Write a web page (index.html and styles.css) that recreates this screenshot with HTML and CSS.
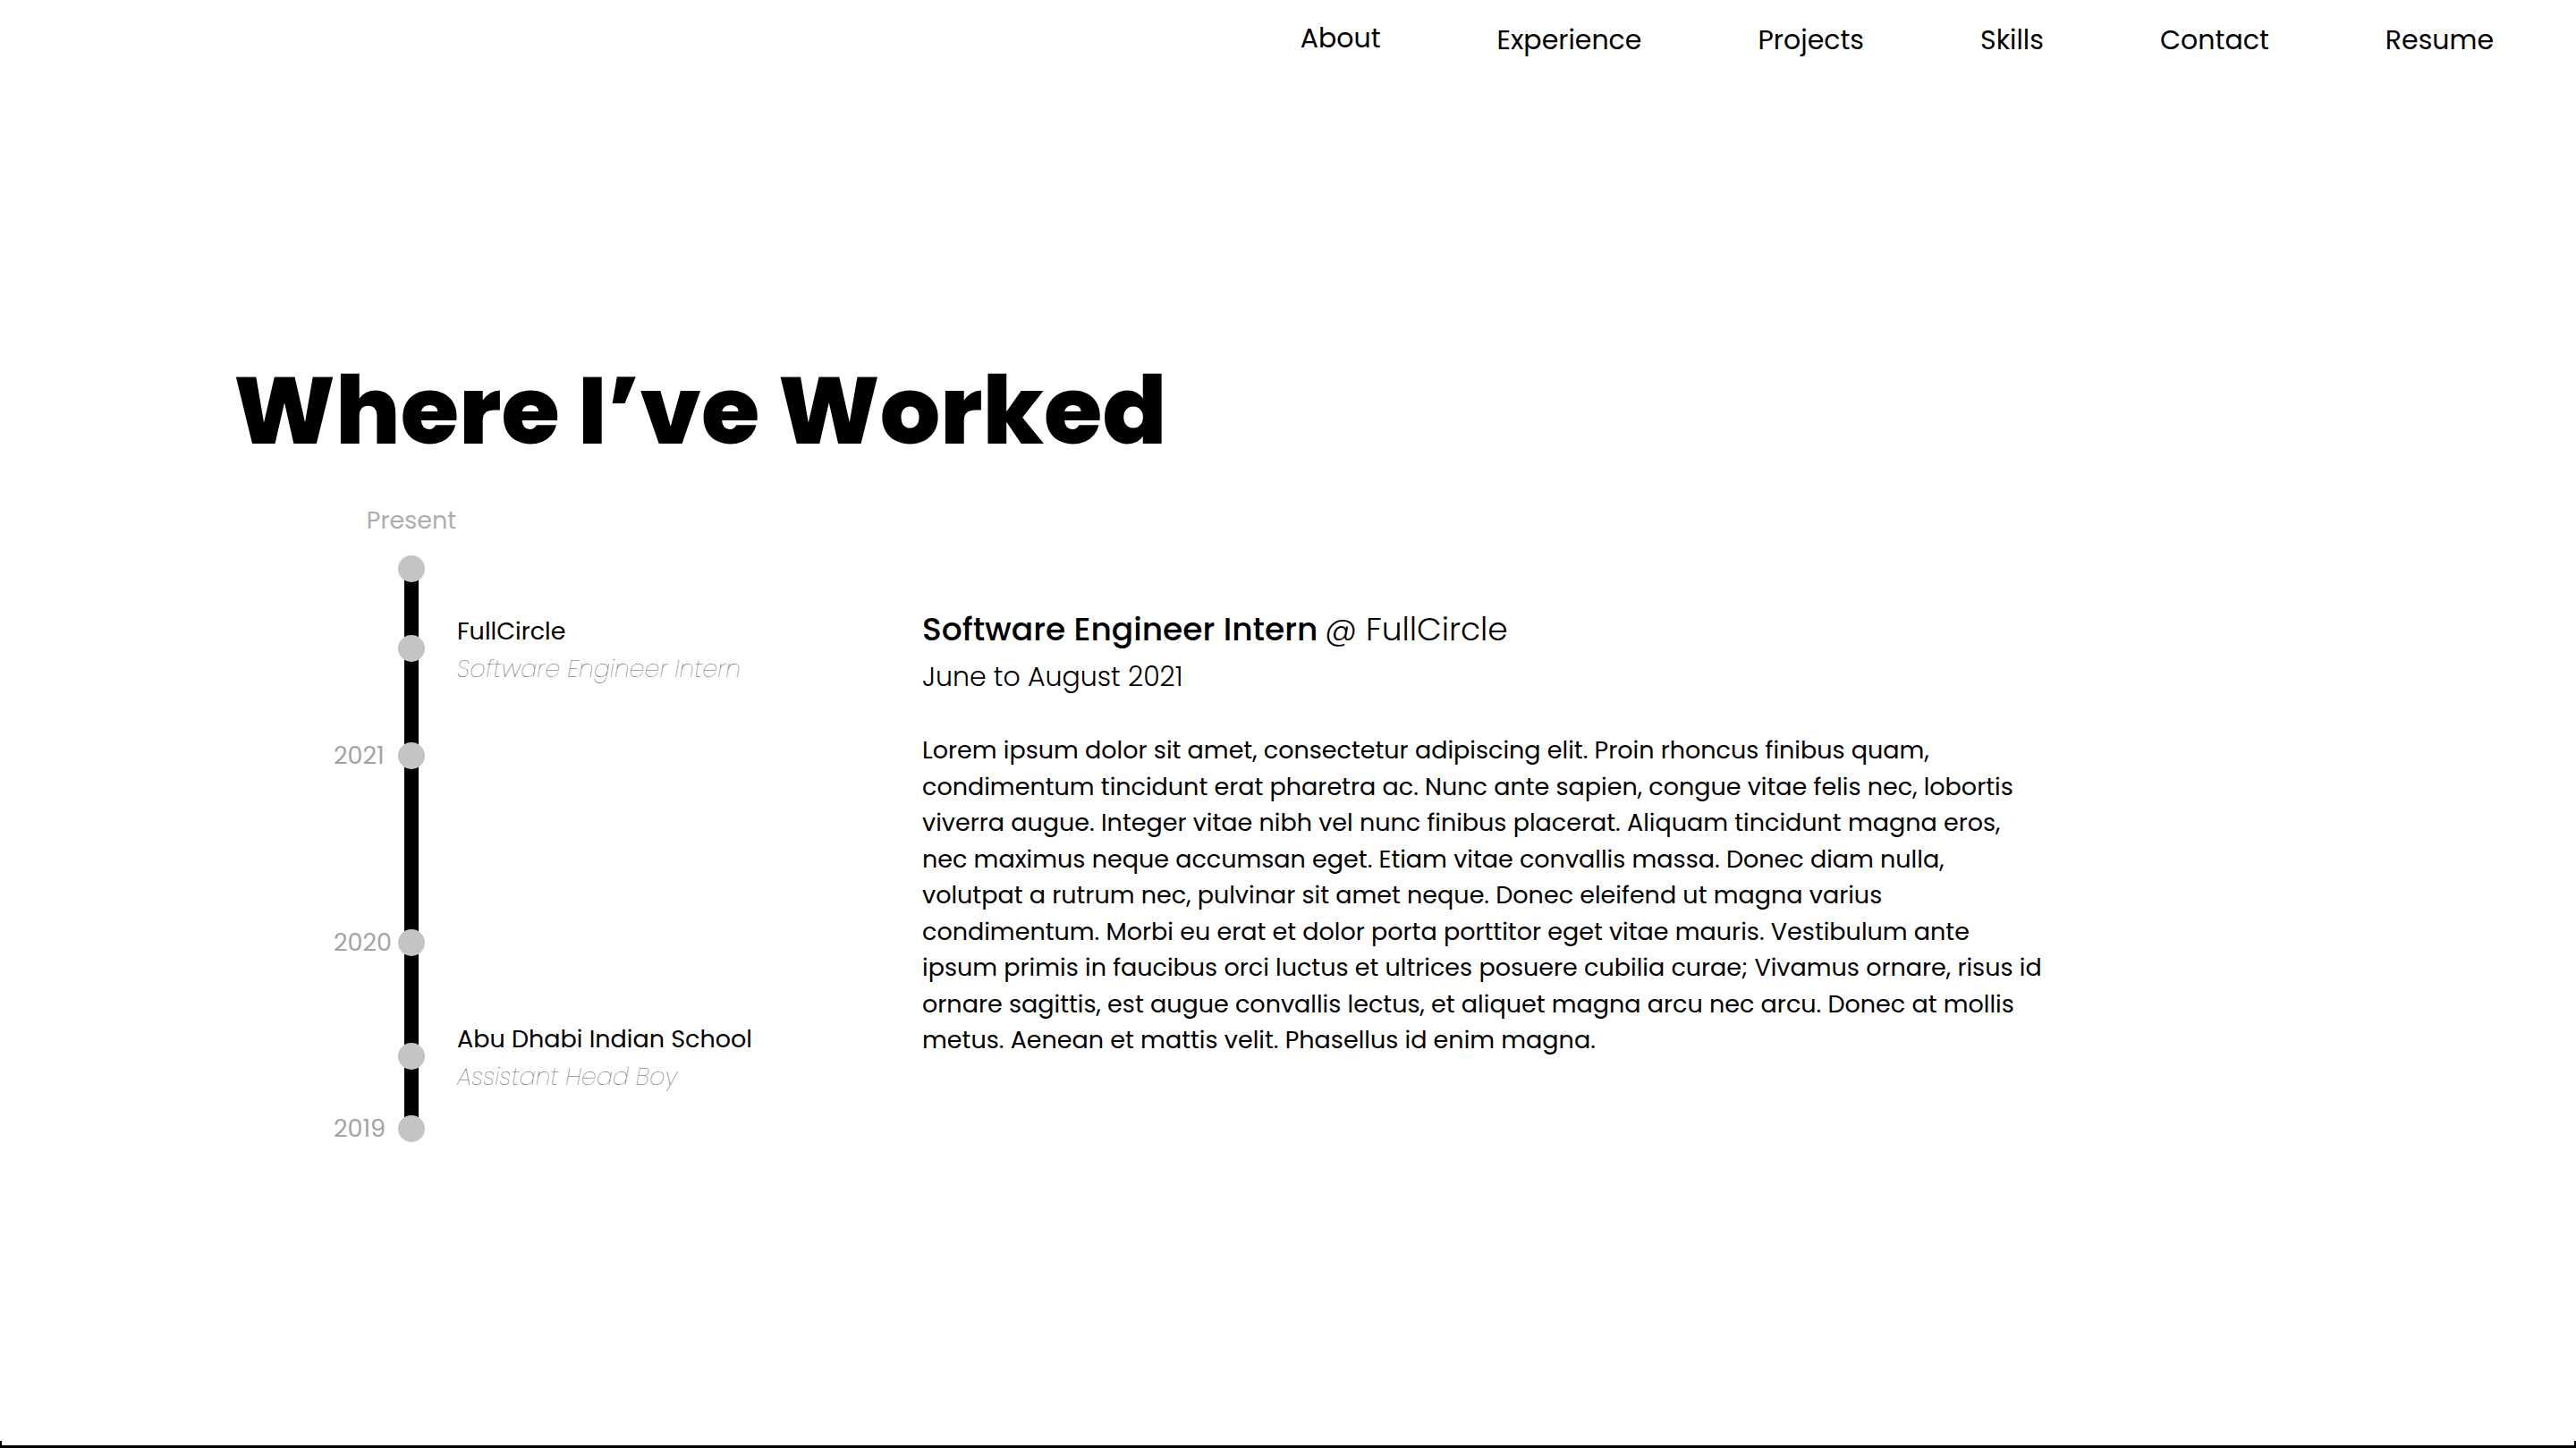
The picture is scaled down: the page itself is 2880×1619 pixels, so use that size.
FILE: index.html
```html
<!DOCTYPE html>
<html lang="en">
<head>
<meta charset="utf-8">
<title>Where I've Worked</title>
<link rel="stylesheet" href="styles.css">
</head>
<body>
<div class="page">
  <nav class="nav">
    <a class="nav-link nav-link--active" href="#about">About</a>
    <a class="nav-link" href="#experience">Experience</a>
    <a class="nav-link" href="#projects">Projects</a>
    <a class="nav-link" href="#skills">Skills</a>
    <a class="nav-link" href="#contact">Contact</a>
    <a class="nav-link" href="#resume">Resume</a>
  </nav>

  <section class="experience" id="experience">
    <h1 class="heading">Where I’ve Worked</h1>
    <div class="content">
      <div class="timeline">
        <div class="tl-present">Present</div>
        <div class="tl-row"><span class="tl-year"></span><span class="tl-dot"></span></div>
        <div class="tl-seg seg-1"></div>
        <div class="tl-row">
          <span class="tl-year"></span><span class="tl-dot"></span>
          <div class="tl-item">
            <div class="tl-co">FullCircle</div>
            <div class="tl-role">Software Engineer Intern</div>
          </div>
        </div>
        <div class="tl-seg seg-2"></div>
        <div class="tl-row"><span class="tl-year">2021</span><span class="tl-dot"></span></div>
        <div class="tl-seg seg-3"></div>
        <div class="tl-row"><span class="tl-year">2020</span><span class="tl-dot"></span></div>
        <div class="tl-seg seg-4"></div>
        <div class="tl-row">
          <span class="tl-year"></span><span class="tl-dot"></span>
          <div class="tl-item">
            <div class="tl-co">Abu Dhabi Indian School</div>
            <div class="tl-role">Assistant Head Boy</div>
          </div>
        </div>
        <div class="tl-seg seg-5"></div>
        <div class="tl-row"><span class="tl-year">2019</span><span class="tl-dot"></span></div>
      </div>

      <article class="job">
        <h2 class="job-title"><span class="job-role">Software Engineer Intern</span> <span class="job-at">@ FullCircle</span></h2>
        <div class="job-date">June to August 2021</div>
        <p class="job-desc">Lorem ipsum dolor sit amet, consectetur adipiscing elit. Proin rhoncus finibus quam,<br>
condimentum tincidunt erat pharetra ac. Nunc ante sapien, congue vitae felis nec, lobortis<br>
viverra augue. Integer vitae nibh vel nunc finibus placerat. Aliquam tincidunt magna eros,<br>
nec maximus neque accumsan eget. Etiam vitae convallis massa. Donec diam nulla,<br>
volutpat a rutrum nec, pulvinar sit amet neque. Donec eleifend ut magna varius<br>
condimentum. Morbi eu erat et dolor porta porttitor eget vitae mauris. Vestibulum ante<br>
ipsum primis in faucibus orci luctus et ultrices posuere cubilia curae; Vivamus ornare, risus id<br>
ornare sagittis, est augue convallis lectus, et aliquet magna arcu nec arcu. Donec at mollis<br>
metus. Aenean et mattis velit. Phasellus id enim magna.</p>
      </article>
    </div>
  </section>

  <div class="frame-edge"></div>
</div>
</body>
</html>
```

FILE: styles.css
```css
* { box-sizing: border-box; }

html, body {
  margin: 0;
  padding: 0;
  background: #ffffff;
  color: #000000;
  font-family: "Poppins", "Inter", "Noto Sans", sans-serif;
}

.page {
  height: 100vh;
  display: flex;
  flex-direction: column;
  overflow: hidden;
}

/* ---------- nav ---------- */
.nav {
  height: 88px;
  flex: none;
  display: flex;
  justify-content: flex-end;
  align-items: center;
  gap: 130px;
  padding-right: 92px;
}

.nav-link {
  font-size: 30px;
  font-weight: 400;
  color: #000;
  text-decoration: none;
  line-height: 40px;
  margin-top: 2px;
}

.nav-link--active {
  transform: translateY(-2px);
}

/* ---------- section ---------- */
.experience {
  padding-left: 261px;
}

.heading {
  margin: 318px 0 0 0;
  font-size: 106px;
  line-height: 107px;
  font-weight: 800;
}

.content {
  display: flex;
  margin-top: 49px;
}

/* ---------- timeline ---------- */
.timeline {
  width: 661px;
  flex: none;
  margin-left: 109px;
  display: flex;
  flex-direction: column;
}

.tl-present {
  width: 30px;
  margin-left: 75px;
  margin-bottom: 19px;
  display: flex;
  justify-content: center;
  white-space: nowrap;
  font-size: 27px;
  line-height: 40px;
  color: #adadad;
}

.tl-row {
  height: 30px;
  display: flex;
  align-items: center;
}

.tl-year {
  width: 75px;
  flex: none;
  padding-left: 3px;
  font-size: 27px;
  line-height: 30px;
  color: #a3a3a3;
}

.tl-dot {
  width: 30px;
  height: 30px;
  flex: none;
  border-radius: 50%;
  background: #c4c4c4;
  position: relative;
  z-index: 1;
}

.tl-seg {
  width: 16px;
  margin-left: 82px;
  margin-top: -5px;
  margin-bottom: -5px;
  background: #000;
}

.seg-1 { height: 69px; }
.seg-2 { height: 100px; }
.seg-3 { height: 189px; }
.seg-4 { height: 107px; }
.seg-5 { height: 61px; }

.tl-item {
  margin-left: 36px;
  padding-top: 3px;
  white-space: nowrap;
}

.tl-co {
  font-size: 27px;
  line-height: 42px;
  font-weight: 400;
  color: #000;
}

.tl-role {
  font-size: 27px;
  line-height: 42px;
  font-weight: 200;
  font-style: italic;
  color: #5e5e5e;
}

/* ---------- job panel ---------- */
.job {
  margin-top: 117px;
  width: 1300px;
}

.job-title {
  margin: 0;
  font-size: 36px;
  line-height: 50px;
  white-space: nowrap;
}

.job-role {
  font-weight: 500;
}

.job-at {
  font-weight: 300;
}

.job-date {
  margin-top: 7px;
  font-size: 30px;
  line-height: 42px;
  font-weight: 300;
}

.job-desc {
  margin: 41px 0 0 0;
  font-size: 27px;
  line-height: 40.5px;
  font-weight: 400;
  white-space: nowrap;
}

/* ---------- bottom frame edge ---------- */
.frame-edge {
  margin-top: auto;
  height: 8px;
  flex: none;
  border-left: 2px solid #000;
  border-right: 2px solid #000;
  border-bottom: 3px solid #000;
}
```
